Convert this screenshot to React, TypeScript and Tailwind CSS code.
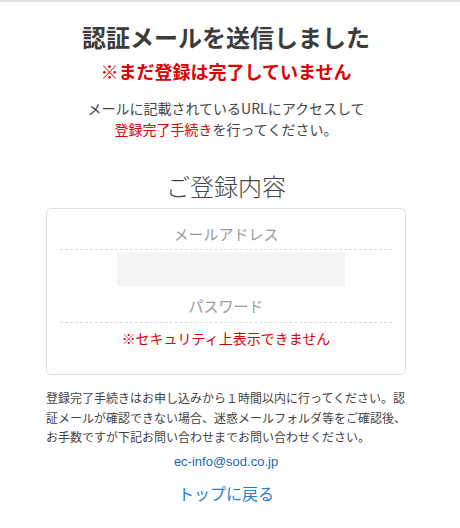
export default function App() {
  return (
    <div
      className="min-h-[528px] bg-white border-t-2 border-[#e2e2e2] text-[#333]"
      style={{ fontFamily: '"Noto Sans CJK JP", "Noto Sans", sans-serif' }}
    >
      <div className="ml-[46px] w-[360px] flex flex-col">
        <h1 className="mt-[19px] text-center text-[24px] leading-[32px] font-bold text-[#3c3c3c]">
          認証メールを送信しました
        </h1>
        <p className="mt-[5px] text-center text-[18px] leading-[26px] font-bold text-[#dd0000]">
          ※まだ登録は完了していません
        </p>
        <p className="mt-[14px] text-center text-[14px] leading-[21px] text-[#444]">
          メールに記載されているURLにアクセスして
          <br />
          <span className="text-[#dd0000]">登録完了手続き</span>を行ってください。
        </p>

        <h2 className="mt-[30px] text-center text-[24px] leading-[32px] font-light text-[#444]">
          ご登録内容
        </h2>

        <div className="mt-[6px] h-[167px] border border-[#e0e0e0] rounded-[5px] flex flex-col">
          <div className="mx-[13px] pt-[14px] pb-[4px] border-b border-dashed border-[#dcdcdc] text-center text-[15px] leading-[22px] text-[#9a9a9a]">
            メールアドレス
          </div>
          <div className="ml-[70px] mt-[2px] w-[228px] h-[34px] bg-[#f6f4f4]" />
          <div className="mx-[13px] mt-[9px] pb-[5px] border-b border-dashed border-[#dcdcdc] text-center text-[15px] leading-[22px] text-[#9a9a9a]">
            パスワード
          </div>
          <p className="mt-[5px] text-center text-[14px] leading-[20px] text-[#dd0000]">
            ※セキュリティ上表示できません
          </p>
        </div>

        <p className="mt-[13px] text-[12px] leading-[19.5px] text-[#444]">
          登録完了手続きはお申し込みから１時間以内に行ってください。認証メールが確認できない場合、迷惑メールフォルダ等をご確認後、お手数ですが下記お問い合わせまでお問い合わせください。
        </p>

        <a
          href="mailto:ec-info@sod.co.jp"
          className="mt-[6px] text-center text-[13px] leading-[18px] text-[#1f64b5]"
          style={{ fontFamily: '"Liberation Sans", Arial, sans-serif' }}
        >
          ec-info@sod.co.jp
        </a>
        <a href="#" className="mt-[11px] text-center text-[16px] leading-[22px] text-[#2a7bd0]">
          トップに戻る
        </a>
      </div>
    </div>
  );
}
